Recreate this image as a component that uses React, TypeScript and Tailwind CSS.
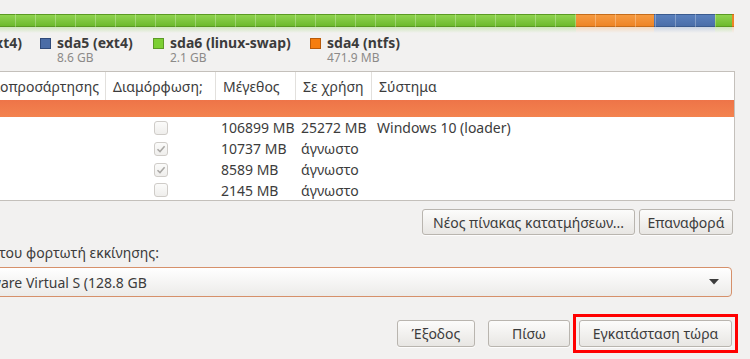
import React from 'react';

const font = { fontFamily: '"Noto Sans", "DejaVu Sans", sans-serif' };

// hidden prefix: zero-width box, text overflows to the left and is clipped by the window
const Cut: React.FC<{ text: string }> = ({ text }) => (
  <span className="flex w-0 justify-end whitespace-nowrap">{text}</span>
);

const Check: React.FC<{ checked?: boolean }> = ({ checked }) => (
  <div className="flex h-[14px] w-[14px] items-center justify-center rounded-[3px] border border-[#cfccc8] bg-gradient-to-b from-[#fbfbfa] to-[#efeeec]">
    {checked && (
      <svg width="10" height="10" viewBox="0 0 10 10">
        <path d="M1.5 5.2 L4 7.6 L8.6 2.2" fill="none" stroke="#a9a7a4" strokeWidth="1.5" />
      </svg>
    )}
  </div>
);

const Button: React.FC<{ label: string; w: string }> = ({ label, w }) => (
  <button
    className={`flex h-full items-center justify-center rounded-[3px] border border-[#b9b5af] bg-gradient-to-b from-[#fcfcfb] to-[#e8e6e3] text-[14px] text-[#3c3c3c] shadow-[0_1px_0_rgba(255,255,255,0.8)] ${w}`}
  >
    {label}
  </button>
);

const segments = [
  { grow: true, bar: 'bg-gradient-to-b from-[#8fd34f] to-[#6dba2c] border-[#5a9a22]', glow: 'from-[#b8e09a]' },
  { w: 'w-[78px]', bar: 'bg-gradient-to-b from-[#f59a40] to-[#ee8424] border-[#c56c1a]', glow: 'from-[#f6caa0]' },
  { w: 'w-[61px]', bar: 'bg-gradient-to-b from-[#5a80bd] to-[#4a6ea9] border-[#3b5b8e]', glow: 'from-[#b3c3dc]' },
  { w: 'w-[17px]', bar: 'bg-gradient-to-b from-[#8fd34f] to-[#6dba2c] border-[#5a9a22]', glow: 'from-[#b8e09a]' },
  { w: 'w-[2px]', bar: 'bg-[#ee8424] border-[#c56c1a]', glow: 'from-[#f6caa0]' },
];

const rows = [
  { size: '106899 MB', used: '25272 MB', system: 'Windows 10 (loader)', checked: false, h: 'h-[21px]' },
  { size: '10737 MB', used: 'άγνωστο', system: '', checked: true, h: 'h-[21px]' },
  { size: '8589 MB', used: 'άγνωστο', system: '', checked: true, h: 'h-[21px]' },
  { size: '2145 MB', used: 'άγνωστο', system: '', checked: false, h: 'h-[20px]' },
];

export default function App() {
  return (
    <div style={font} className="relative h-[359px] w-[750px] overflow-hidden bg-[#f2f1f0] text-[#3c3c3c]">
      {/* partition bar */}
      <div className="relative mr-[16px] mt-[14px] flex">
        {segments.map((s, i) => (
          <div key={i} className={`flex flex-col ${s.grow ? 'flex-1' : s.w}`}>
            <div className={`h-[13px] border-y ${s.bar}`} />
            <div className={`h-[6px] bg-gradient-to-b to-transparent opacity-60 ${s.glow}`} />
          </div>
        ))}
        <div className="absolute left-0 right-0 top-0 h-[13px] bg-[repeating-linear-gradient(90deg,transparent_0_15px,rgba(255,255,255,0.28)_15px_16px,transparent_16px_20px)]" />
      </div>

      {/* legend */}
      <div className="mt-[2px] flex">
        <div className="flex w-[40px]">
          <div className="flex w-[22px] justify-end text-[14px] font-bold leading-[16px]">
            <Cut text="sda1 (ext4)" />
          </div>
        </div>
        {[
          { name: 'sda5 (ext4)', size: '8.6 GB', color: 'bg-[#4a6ca6] border-[#2f4a7a]', w: 'w-[113px]' },
          { name: 'sda6 (linux-swap)', size: '2.1 GB', color: 'bg-[#7ccf34] border-[#5c9a26]', w: 'w-[157px]' },
          { name: 'sda4 (ntfs)', size: '471.9 MB', color: 'bg-[#f57d0f] border-[#b85a0a]', w: 'w-[120px]' },
        ].map((l) => (
          <div key={l.name} className={`flex gap-[6px] ${l.w}`}>
            <div className={`mt-[3px] h-[11px] w-[11px] border ${l.color}`} />
            <div className="flex flex-col whitespace-nowrap">
              <span className="text-[14px] font-bold leading-[16px]">{l.name}</span>
              <span className="text-[12px] leading-[14px] text-[#8c8a88]">{l.size}</span>
            </div>
          </div>
        ))}
      </div>

      {/* partition table */}
      <div className="ml-[-2px] mr-[15px] mt-[6px] flex flex-col border border-[#c4c0bb] bg-white text-[14px]">
        <div className="flex h-[28px]">
          <div className="flex w-[107px] items-center justify-end border-r border-[#e2e0dd] pr-[6px] whitespace-nowrap">
            <Cut text="Σημείο " />
            προσάρτησης
          </div>
          <div className="flex w-[110px] items-center border-r border-[#e2e0dd] pl-[7px]">Διαμόρφωση;</div>
          <div className="flex w-[80px] items-center border-r border-[#e2e0dd] pl-[7px]">Μέγεθος</div>
          <div className="flex w-[76px] items-center border-r border-[#e2e0dd] pl-[7px]">Σε χρήση</div>
          <div className="flex flex-1 items-center pl-[7px]">Σύστημα</div>
        </div>
        <div className="h-[17px] bg-gradient-to-b from-[#ee7448] to-[#f3834f]" />
        {rows.map((r, i) => (
          <div key={i} className={`flex items-center ${r.h}`}>
            <div className="w-[107px]" />
            <div className="flex w-[110px] justify-center pr-[1px]">
              <Check checked={r.checked} />
            </div>
            <div className="w-[80px] pl-[5px] whitespace-nowrap">{r.size}</div>
            <div className="w-[76px] pl-[5px] whitespace-nowrap">{r.used}</div>
            <div className="flex-1 pl-[5px] whitespace-nowrap">{r.system}</div>
          </div>
        ))}
      </div>

      {/* table actions */}
      <div className="mr-[17px] mt-[8px] flex h-[26px] justify-end gap-[4px]">
        <Button label="Νέος πίνακας κατατμήσεων..." w="w-[213px]" />
        <Button label="Επαναφορά" w="w-[94px]" />
      </div>

      {/* boot loader device */}
      <div className="ml-[-1px] mt-[8px] flex text-[14px] leading-[20px] whitespace-nowrap">
        <Cut text="Συσκευή για την εγκατάσταση " />
        του φορτωτή εκκίνησης:
      </div>
      <div className="ml-[-10px] mr-[18px] mt-[4px] flex h-[30px] items-center rounded-[4px] border border-[#d6906a] bg-gradient-to-b from-[#ffffff] to-[#ecebe9] pl-[10px] pr-[12px] text-[14px]">
        <div className="flex flex-1 whitespace-nowrap">
          <Cut text="VMw" />
          are Virtual S (128.8 GB
        </div>
        <svg width="10" height="6" viewBox="0 0 10 6">
          <path d="M0 0 H10 L5 5.5 Z" fill="#3c3c3c" />
        </svg>
      </div>

      {/* dialog buttons */}
      <div className="mr-[18px] mt-[23px] flex h-[27px] justify-end">
        <Button label="Έξοδος" w="w-[78px]" />
        <div className="w-[13px]" />
        <Button label="Πίσω" w="w-[82px]" />
        <div className="w-[9px]" />
        <Button label="Εγκατάσταση τώρα" w="w-[153px]" />
      </div>

      {/* annotation frame */}
      <div className="absolute left-[573px] top-[314px] h-[39px] w-[165px] border-[3px] border-[#ff0000]" />
    </div>
  );
}
